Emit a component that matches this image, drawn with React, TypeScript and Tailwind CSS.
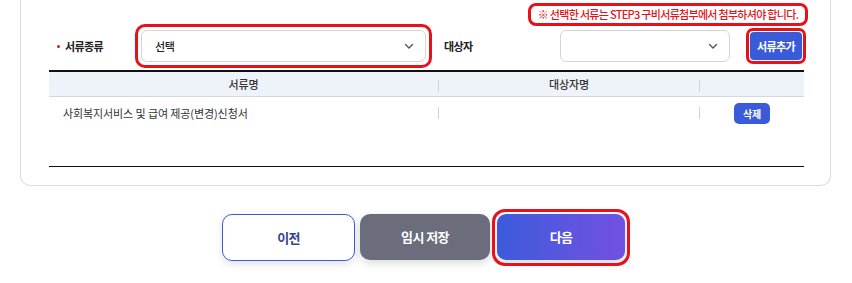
import React from "react";

const FONT = { fontFamily: '"Noto Sans CJK KR", "Noto Sans", sans-serif' };

// red annotation outline laid over a control
function Mark({ inset = "-inset-[6px]", radius = "rounded-[10px]" }: { inset?: string; radius?: string }) {
  return (
    <span
      className={`pointer-events-none absolute ${inset} ${radius} border-[3px] border-[#e5121b]`}
    />
  );
}

function Chevron() {
  return (
    <svg width="12" height="12" viewBox="0 0 12 12" fill="none" className="text-[#555]">
      <path d="M2.5 4.5 6 8l3.5-3.5" stroke="currentColor" strokeWidth="1.4" strokeLinecap="round" strokeLinejoin="round" />
    </svg>
  );
}

function Select({ value, className }: { value?: string; className?: string }) {
  return (
    <div
      className={`flex h-[32px] items-center justify-between rounded-[6px] border border-[#d4d4d8] bg-white pl-[13px] pr-[10px] ${className ?? ""}`}
    >
      <span className="text-[11px] font-medium text-[#222] tracking-[-0.3px]">{value}</span>
      <Chevron />
    </div>
  );
}

export default function App() {
  return (
    <div className="relative h-[283px] w-[852px] overflow-hidden bg-white" style={FONT}>
      {/* card */}
      <div className="ml-[20px] w-[811px] rounded-b-[10px] border border-t-0 border-[#d9dcd6] pt-[3px] pb-[18px]">
        {/* note */}
        <div className="flex h-[23px] justify-end pr-[22px]">
          <div className="flex w-[280px] items-center justify-center rounded-[8px] border-[3px] border-[#e5121b] bg-white">
            <span className="text-[11px] font-medium tracking-[-0.7px] text-[#e5121b]">
              ※ 선택한 서류는 STEP3 구비서류첨부에서 첨부하셔야 합니다.
            </span>
          </div>
        </div>

        {/* filter row */}
        <div className="ml-[28px] mt-[4px] flex h-[32px] items-center">
          <div className="flex w-[92px] items-center pl-[8px]">
            <span className="mr-[5px] h-[3px] w-[3px] rounded-full bg-[#e5121b]" />
            <span className="text-[11px] font-bold tracking-[-0.6px] text-[#222]">서류종류</span>
          </div>
          <div className="relative w-[285px]">
            <Select value="선택" />
            <Mark inset="-inset-[6px]" radius="rounded-[10px]" />
          </div>
          <span className="ml-[18px] w-[116px] text-[11px] font-bold tracking-[-0.6px] text-[#222]">대상자</span>
          <Select className="w-[170px]" />
          <div className="relative ml-[20px]">
            <button className="flex h-[28px] w-[52px] items-center justify-center rounded-[4px] bg-[#3a5bd9] text-[11px] font-bold tracking-[-0.6px] text-white">
              서류추가
            </button>
            <Mark inset="-inset-[4px]" radius="rounded-[7px]" />
          </div>
        </div>

        {/* table */}
        <div className="ml-[28px] mt-[8px] w-[755px] border-t-[2px] border-b border-t-[#111] border-b-[#111] text-[11px] tracking-[-0.1px]">
          <div className="grid h-[25px] grid-cols-[389px_262px_104px] items-center border-b border-[#d4d7dc] bg-[#eef2f9] font-medium text-[#333]">
            <div className="text-center">서류명</div>
            <div className="relative text-center">
              <span className="absolute left-0 top-[4px] h-[12px] w-px bg-[#cfd3d9]" />
              대상자명
              <span className="absolute right-0 top-[4px] h-[12px] w-px bg-[#cfd3d9]" />
            </div>
            <div />
          </div>
          <div className="grid h-[32px] grid-cols-[389px_262px_104px] items-center text-[#333]">
            <div className="pl-[14px]">사회복지서비스 및 급여 제공(변경)신청서</div>
            <div className="flex h-[12px] justify-between">
              <span className="w-px bg-[#d0d3d8]" />
              <span className="w-px bg-[#d0d3d8]" />
            </div>
            <div className="flex justify-center">
              <button className="flex h-[21px] w-[36px] items-center justify-center rounded-[5px] bg-[#3a5bd9] text-[10px] font-bold text-white">
                삭제
              </button>
            </div>
          </div>
          <div className="h-[37px]" />
        </div>
      </div>

      {/* bottom buttons */}
      <div className="mt-[28px] flex justify-center gap-[5px] pr-[5px] text-[13px] font-bold tracking-[-0.6px]">
        <button className="h-[47px] w-[133px] rounded-[10px] border border-[#3d5bd6] bg-white text-[#34448f] shadow-[0_3px_8px_rgba(0,0,0,0.12)]">
          이전
        </button>
        <button className="h-[46px] w-[130px] rounded-[10px] bg-[#6b6d7c] text-white shadow-[0_3px_8px_rgba(0,0,0,0.15)]">
          임시 저장
        </button>
        <div className="relative ml-[2px]">
          <button className="h-[46px] w-[128px] rounded-[9px] bg-gradient-to-r from-[#3a5bdb] to-[#7150e2] text-white shadow-[0_3px_8px_rgba(0,0,0,0.15)]">
            다음
          </button>
          <Mark inset="-inset-[5px]" radius="rounded-[13px]" />
        </div>
      </div>
    </div>
  );
}
